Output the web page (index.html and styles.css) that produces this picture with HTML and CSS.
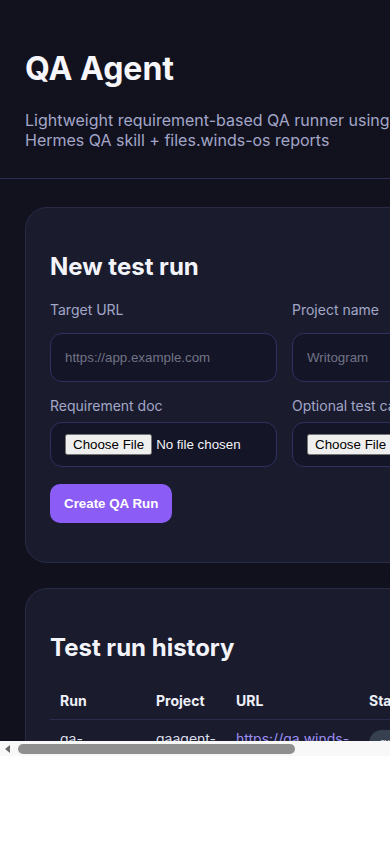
FILE: index.html
```html
<!DOCTYPE html>
<html lang="en">
<head>
<meta charset="utf-8">
<meta name="viewport" content="width=device-width, initial-scale=1">
<title>QA Agent</title>
<link rel="stylesheet" href="styles.css">
</head>
<body>
<div class="frame">
  <div class="app">
    <header class="hero">
      <h1>QA Agent</h1>
      <p>Lightweight requirement-based QA runner using Hermes QA skill + files.winds-os reports</p>
    </header>
    <main class="main">
      <section class="card">
        <h2>New test run</h2>
        <form class="form">
          <div class="fields">
            <label class="field">
              <span class="label">Target URL</span>
              <input class="text-input" type="url" placeholder="https://app.example.com">
            </label>
            <label class="field">
              <span class="label">Project name</span>
              <input class="text-input" type="text" placeholder="Writogram">
            </label>
            <label class="field field-file">
              <span class="label">Requirement doc</span>
              <input class="file-input" type="file">
            </label>
            <label class="field field-file">
              <span class="label">Optional test cases</span>
              <input class="file-input" type="file">
            </label>
          </div>
          <button class="primary" type="submit">Create QA Run</button>
        </form>
      </section>
      <section class="card">
        <h2>Test run history</h2>
        <table class="runs">
          <colgroup>
            <col class="c-run">
            <col class="c-project">
            <col class="c-url">
            <col class="c-status">
            <col>
          </colgroup>
          <thead>
            <tr><th>Run</th><th>Project</th><th>URL</th><th>Status</th><th>Report</th></tr>
          </thead>
          <tbody>
            <tr>
              <td>qa-20250614-7c2e91</td>
              <td>qaagent-demo</td>
              <td><a class="link" href="#">https://qa.winds-os.com</a></td>
              <td><span class="pill">queued</span></td>
              <td>—</td>
            </tr>
          </tbody>
        </table>
      </section>
    </main>
  </div>
  <div class="hscroll" aria-hidden="true">
    <span class="hscroll-arrow"></span>
    <span class="hscroll-thumb"></span>
  </div>
</div>
</body>
</html>
```

FILE: styles.css
```css
* { box-sizing: border-box; }

html, body {
  margin: 0;
  overflow: hidden;
  background: #ffffff;
}

body {
  font-family: Inter, "Noto Sans", sans-serif;
}

.frame {
  width: 390px;
  height: 756px;
  overflow: hidden;
  display: flex;
  flex-direction: column;
}

.app {
  flex: none;
  width: 415px;
  height: 741px;
  overflow: hidden;
  background: linear-gradient(180deg, #12121f 0%, #11101d 100%);
  color: #eef0fa;
}

.hero {
  padding: 49px 25px 28px;
  border-bottom: 1px solid #2a2d55;
}

.hero h1 {
  margin: 0;
  font-size: 32px;
  font-weight: 700;
  line-height: normal;
  color: #f6f6fb;
}

.hero p {
  margin: 22px 0 0;
  font-size: 16px;
  line-height: normal;
  color: #a3a6c8;
}

.main {
  width: 569px;
  padding: 28px 25px;
  display: flex;
  flex-direction: column;
  gap: 25px;
}

.card {
  background: #1a1c2e;
  border: 1px solid #282b47;
  border-radius: 22px;
  padding: 24px;
}

.card h2 {
  margin: 19.92px 0;
  font-size: 24px;
  font-weight: 700;
  line-height: normal;
  color: #f3f4fa;
}

.form {
  display: flex;
  flex-direction: column;
  align-items: flex-start;
  gap: 17px;
  padding-bottom: 15px;
}

.fields {
  width: 100%;
  display: grid;
  grid-template-columns: 1fr 1fr;
  column-gap: 15px;
  row-gap: 15px;
}

.field {
  display: flex;
  flex-direction: column;
  gap: 15.5px;
  min-width: 0;
}

.field-file {
  gap: 8.5px;
}

.label {
  font-size: 14px;
  line-height: normal;
  color: #a3a6c6;
}

.text-input {
  width: 100%;
  height: 48.5px;
  padding: 0 14px;
  border: 1px solid #2e3160;
  border-radius: 12px;
  background: #141526;
  color: #e8e9f3;
  font: 13.333px "Liberation Sans", Arial, sans-serif;
  outline: none;
}

.text-input::placeholder {
  color: #717386;
}

.file-input {
  width: 100%;
  padding: 11px 14px;
  border: 1px solid #2e3160;
  border-radius: 12px;
  background: #141526;
  color: #f2f2f7;
  font: 13.333px "Liberation Sans", Arial, sans-serif;
}

.primary {
  padding: 12px 14px;
  border: 0;
  border-radius: 10px;
  background: #8b5cf6;
  color: #ffffff;
  font: 700 13.333px "Liberation Sans", Arial, sans-serif;
}

.runs {
  width: 100%;
  border-collapse: collapse;
  table-layout: fixed;
  font-size: 14px;
  line-height: normal;
}

.c-run { width: 96px; }
.c-project { width: 80px; }
.c-url { width: 133px; }
.c-status { width: 92px; }

.runs th {
  padding: 10px;
  text-align: left;
  font-weight: 700;
  color: #eff0f8;
  border-bottom: 1px solid #2a2d4d;
}

.runs td {
  padding: 10px;
  vertical-align: top;
  color: #dcdeea;
}

.link {
  color: #9d8ef2;
  text-decoration: none;
}

.pill {
  display: inline-block;
  padding: 5px 10px;
  border-radius: 999px;
  background: #36404f;
  color: #bcc3cf;
  font-size: 13px;
}

.hscroll {
  flex: none;
  height: 15px;
  background: #f8f8f8;
  display: flex;
  align-items: center;
  padding-left: 5px;
}

.hscroll-arrow {
  width: 0;
  height: 0;
  border-top: 4px solid transparent;
  border-bottom: 4px solid transparent;
  border-right: 5px solid #6a6a6a;
}

.hscroll-thumb {
  margin-left: 8px;
  width: 277px;
  height: 10px;
  border-radius: 5px;
  background: #8f8f8f;
}
```
